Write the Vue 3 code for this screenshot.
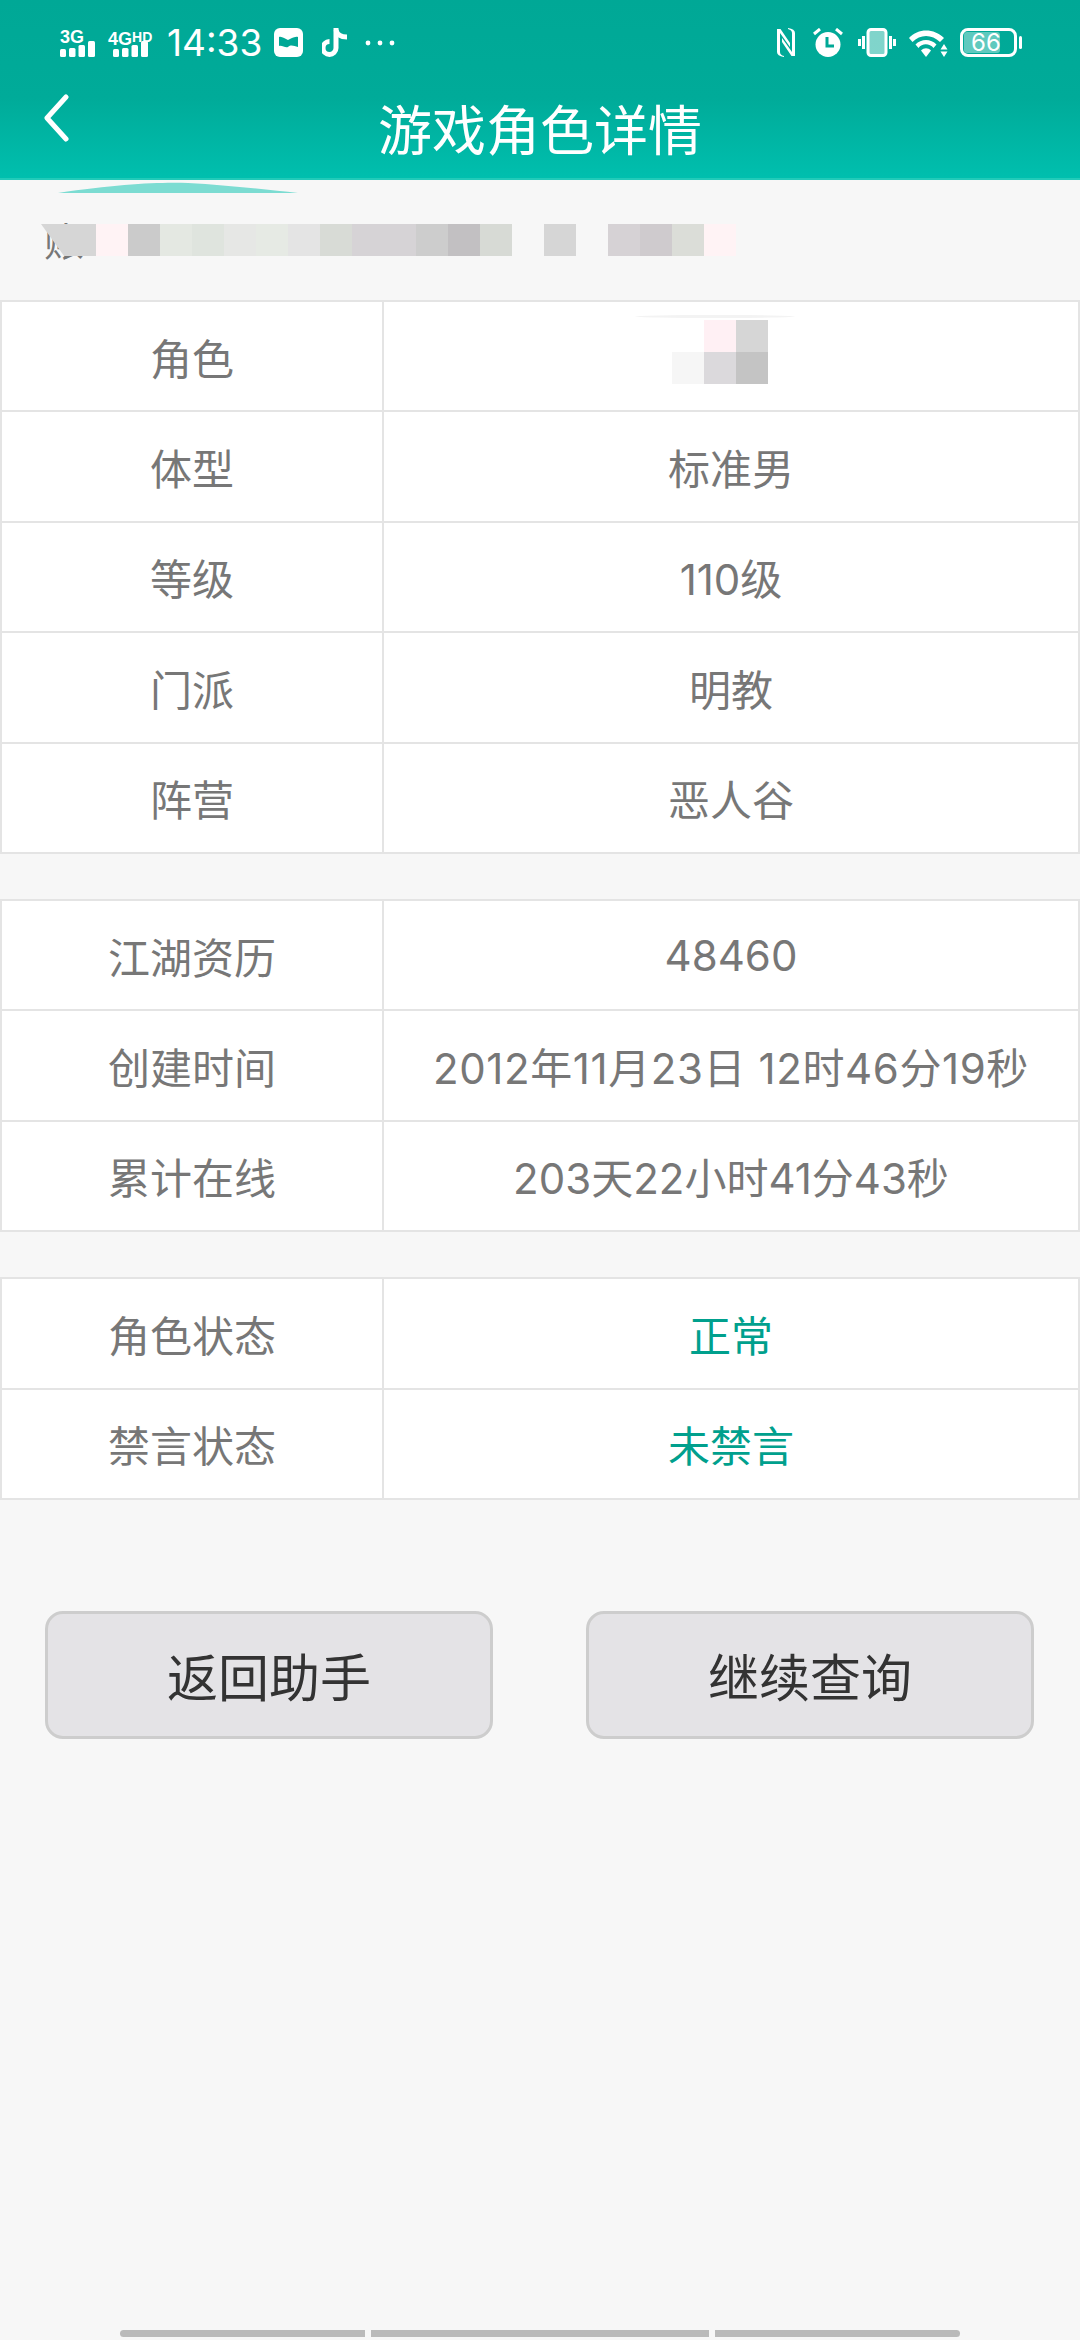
<script setup>
const nameBlocks = ['#fff3f5', '#cbcbcb', '#e4e8e2', '#dfe4de', '#e6e7e5', '#e6eae4', '#e4e4e4', '#d8dbd6', '#d6d3d6', '#d6d3d6', '#cdcdcd', '#c2c0c2', '#d7dad5', 'transparent', '#d6d6d6', 'transparent', '#d6d2d5', '#cfcbce', '#dbddd8', '#fff3f5']
const roleBlocks = ['transparent', '#fff0f4', '#d6d6d6', '#f6f6f6', '#dbd9dc', '#c4c4c4']

const groups = [
  [
    { label: '角色', value: '', mosaic: true },
    { label: '体型', value: '标准男' },
    { label: '等级', value: '110级' },
    { label: '门派', value: '明教' },
    { label: '阵营', value: '恶人谷' },
  ],
  [
    { label: '江湖资历', value: '48460' },
    { label: '创建时间', value: '2012年11月23日 12时46分19秒', wide: true },
    { label: '累计在线', value: '203天22小时41分43秒' },
  ],
  [
    { label: '角色状态', value: '正常', ok: true },
    { label: '禁言状态', value: '未禁言', ok: true },
  ],
]
</script>

<template>
  <div class="page">
    <header class="head">
      <div class="status">
        <div class="status-left">
          <div class="net">
            <span class="net-label">3G</span>
            <svg class="bars" width="35" height="16" viewBox="0 0 35 16" fill="#fff">
              <rect x="0" y="8" width="6" height="8" rx="1.5" />
              <rect x="9" y="7" width="6.5" height="9" rx="1.5" />
              <rect x="18.5" y="4" width="6.5" height="12" rx="1.5" />
              <rect x="28" y="0" width="7" height="16" rx="1.5" />
            </svg>
          </div>
          <div class="net net-wide">
            <span class="net-label">4G<small>HD</small></span>
            <svg class="bars" width="35" height="16" viewBox="0 0 35 16" fill="#fff">
              <rect x="0" y="8" width="6" height="8" rx="1.5" />
              <rect x="9" y="7" width="6.5" height="9" rx="1.5" />
              <rect x="18.5" y="4" width="6.5" height="12" rx="1.5" />
              <rect x="28" y="0" width="7" height="16" rx="1.5" />
            </svg>
          </div>
          <span class="time">14:33</span>
          <svg class="app-mail" width="29" height="29" viewBox="0 0 29 29">
            <rect width="29" height="29" rx="6" fill="#fff" />
            <path d="M5 9 C8 8 11 11 14 12 C17 11 20 8 24 9 L24 19 C20 18 17 16 14 19 C11 20 8 17 5 18 Z" fill="#00a896" />
          </svg>
          <svg class="app-note" width="26" height="29" viewBox="0 0 26 29" fill="none" stroke="#fff" stroke-width="5">
            <path d="M14 0 V20 A6.5 6.5 0 1 1 7.5 13.5" />
            <path d="M14 2 C15 7 19 9 25 9" />
          </svg>
          <svg class="more" width="30" height="6" viewBox="0 0 30 6" fill="#fff">
            <circle cx="3" cy="3" r="2.4" />
            <circle cx="15" cy="3" r="2.4" />
            <circle cx="27" cy="3" r="2.4" />
          </svg>
        </div>
        <div class="status-right">
          <svg class="i-nfc" width="18" height="29" viewBox="0 0 18 29" fill="#fff">
            <path d="M0 1 L3.5 1 L13 15 L13 19 L3 5 L3 24 Q3 27 7 28 L7 29 Q0 28 0 24 Z" />
            <path d="M18 28 L14.5 28 L5 14 L5 10 L15 24 L15 5 Q15 2 11 1 L11 0 Q18 1 18 5 Z" />
          </svg>
          <svg class="i-alarm" width="30" height="29" viewBox="0 0 30 29">
            <circle cx="15" cy="16.5" r="12.5" fill="#fff" />
            <path d="M14 9 V18 H21" fill="none" stroke="#00a896" stroke-width="3" />
            <path d="M1 6 L7 1 M29 6 L23 1" stroke="#fff" stroke-width="3" />
          </svg>
          <svg class="i-vibrate" width="38" height="29" viewBox="0 0 38 29" fill="none" stroke="#fff">
            <rect x="10" y="1.5" width="18" height="26" rx="3" fill="#ffffff80" stroke-width="3" />
            <path d="M5.5 8 V21 M1.5 11 V18 M32.5 8 V21 M36.5 11 V18" stroke-width="3" />
          </svg>
          <svg class="i-wifi" width="39" height="27" viewBox="0 0 39 27" fill="#fff">
            <path d="M0 8 C9 -2 25 -2 35 8 L31 12 C23 4 11 4 3.5 12 Z" />
            <path d="M6.5 14.5 C12 8.5 22 8.5 27.5 14.5 L24.5 18 C20.5 13 13 13 9.5 18 Z" />
            <path d="M12 20.5 C15 17.5 19 17.5 22 20.5 L17 27 Z" />
            <path d="M35 14 L38.5 19.5 H31.5 Z M31.5 21.5 H38.5 L35 27 Z" />
          </svg>
          <div class="battery">
            <div class="battery-level"></div>
            <span class="battery-num">66</span>
          </div>
        </div>
      </div>
      <div class="title-row">
        <svg class="back" width="28" height="50" viewBox="0 0 28 50" fill="none" stroke="#fff" stroke-width="5" stroke-linecap="round" stroke-linejoin="round">
          <path d="M23 3 L4 24 L23 45" />
        </svg>
        <h1 class="title">游戏角色详情</h1>
      </div>
    </header>

    <svg class="smear" width="240" height="12" viewBox="0 0 240 12">
      <path d="M0 11 C60 2 100 0 130 1 C170 3 210 8 240 11 Z" fill="#7cdcd2" />
    </svg>

    <div class="account">
      <span class="account-first">账</span>
      <div class="mosaic-row">
        <i class="mosaic-cut"></i>
        <i v-for="(c, i) in nameBlocks" :key="i" :style="{ background: c }"></i>
      </div>
    </div>

    <div class="tables">
      <div v-for="(rows, g) in groups" :key="g" class="table">
        <div v-for="row in rows" :key="row.label" class="row">
          <div class="cell">{{ row.label }}</div>
          <div class="cell" :class="{ ok: row.ok, wide: row.wide }">
            {{ row.value }}
            <div v-if="row.mosaic" class="mosaic-role">
              <i v-for="(c, i) in roleBlocks" :key="i" :style="{ background: c }"></i>
            </div>
          </div>
        </div>
      </div>
    </div>

    <div class="actions">
      <button class="btn">返回助手</button>
      <button class="btn">继续查询</button>
    </div>

    <div class="nav-hint">
      <span></span>
      <span></span>
      <span></span>
    </div>
  </div>
</template>

<style>
html,
body {
  margin: 0;
  background: #f7f7f7;
}
</style>

<style scoped>
.page {
  position: relative;
  width: 1080px;
  height: 2340px;
  overflow: hidden;
  background: #f7f7f7;
  font-family: Inter, "Noto Sans CJK SC", sans-serif;
}

.head {
  height: 180px;
  box-sizing: border-box;
  padding-top: 28px;
  border-bottom: 2px solid #22cbb9;
  background: linear-gradient(180deg, #00a896 0%, #00ab99 55%, #00bfae 100%);
  color: #fff;
}

.status {
  display: flex;
  justify-content: space-between;
  align-items: center;
  height: 29px;
  padding: 0 63px 0 60px;
}

.status-left,
.status-right {
  display: flex;
  align-items: center;
}

.net {
  position: relative;
  width: 35px;
  height: 29px;
  margin-right: 13px;
}

.net-wide {
  width: 45px;
  margin-right: 14px;
}

.net-label {
  position: absolute;
  top: -1px;
  left: 0;
  font: bold 18px/20px "Liberation Sans", sans-serif;
  white-space: nowrap;
}

.net-label small {
  font-size: 14px;
  vertical-align: 3px;
}

.bars {
  position: absolute;
  left: 0;
  bottom: 0;
}

.net-wide .bars {
  left: 5px;
}

.time {
  font: 37px/29px Inter, sans-serif;
  margin-right: 12px;
}

.app-mail {
  margin-right: 19px;
}

.app-note {
  margin-right: 17px;
}

.i-nfc {
  margin-right: 18px;
}

.i-alarm {
  margin-right: 15px;
}

.i-vibrate {
  margin-right: 13px;
}

.i-wifi {
  margin-right: 12px;
  align-self: flex-end;
}

.battery {
  position: relative;
  width: 57px;
  height: 29px;
  box-sizing: border-box;
  padding-left: 8px;
  border: 3px solid #fff;
  border-radius: 8px;
  display: flex;
  align-items: center;
}

.battery::after {
  content: "";
  position: absolute;
  right: -8px;
  top: 5px;
  width: 3px;
  height: 13px;
  border-radius: 2px;
  background: #fff;
}

.battery-level {
  position: absolute;
  left: 1px;
  top: 1px;
  bottom: 1px;
  width: 36px;
  border-radius: 3px;
  background: #ffffff60;
}

.battery-num {
  position: relative;
  font: 24px/23px Inter, sans-serif;
}

.title-row {
  position: relative;
  display: flex;
  justify-content: center;
  align-items: center;
  margin-top: 36px;
  height: 70px;
}

.back {
  position: absolute;
  left: 43px;
  top: 1px;
}

.title {
  margin: 0;
  font-size: 54px;
  font-weight: 400;
  line-height: 70px;
  font-family: "Noto Sans CJK SC", sans-serif;
}

.smear {
  position: absolute;
  left: 58px;
  top: 182px;
}

.account {
  position: relative;
  height: 120px;
  box-sizing: border-box;
  padding: 44px 0 0 41px;
}

.account-first {
  position: absolute;
  left: 44px;
  top: 38px;
  font-size: 40px;
  line-height: 48px;
  color: #777;
}

.mosaic-row {
  position: relative;
  display: flex;
  height: 32px;
}

.mosaic-row i {
  width: 32px;
  height: 32px;
}

.mosaic-row .mosaic-cut {
  width: 55px;
  background: #d6d6d6;
  clip-path: polygon(0 0, 100% 0, 100% 100%, 42% 100%);
}

.tables {
  display: flex;
  flex-direction: column;
  gap: 45px;
}

.table {
  border-top: 2px solid #e4e4e4;
  border-left: 2px solid #e4e4e4;
  border-right: 2px solid #e4e4e4;
  background: #fff;
}

.row {
  display: grid;
  grid-template-columns: 380px 1fr;
  height: 110.4px;
  box-sizing: border-box;
  border-bottom: 2px solid #e4e4e4;
}

.cell {
  position: relative;
  display: flex;
  align-items: center;
  justify-content: center;
  font-size: 42px;
  color: #777;
}

.cell + .cell {
  border-left: 2px solid #e4e4e4;
}

.cell.ok {
  color: #00a08d;
}

.cell.wide {
  letter-spacing: 0.6px;
}

.mosaic-role {
  position: absolute;
  left: 288px;
  top: 18px;
  display: grid;
  grid-template-columns: repeat(3, 32px);
  grid-auto-rows: 32px;
}

.mosaic-role::before {
  content: "";
  position: absolute;
  left: -37px;
  top: -5px;
  width: 160px;
  height: 3px;
  border-radius: 50%;
  background: #f3f3f3;
}

.actions {
  display: flex;
  justify-content: space-between;
  padding: 111px 46px 0 45px;
}

.btn {
  width: 448px;
  height: 128px;
  box-sizing: border-box;
  border: 3px solid #cdcdcd;
  border-radius: 18px;
  background: #e4e3e6;
  font-family: "Noto Sans CJK SC", sans-serif;
  font-size: 51px;
  color: #333;
}

.nav-hint {
  position: absolute;
  left: 120px;
  bottom: 3px;
  display: flex;
  gap: 6px;
}

.nav-hint span {
  height: 7px;
  width: 338px;
  background: #bababa;
}

.nav-hint span:first-child {
  width: 245px;
  border-radius: 4px 0 0 4px;
}

.nav-hint span:last-child {
  width: 245px;
  border-radius: 0 4px 4px 0;
}
</style>
